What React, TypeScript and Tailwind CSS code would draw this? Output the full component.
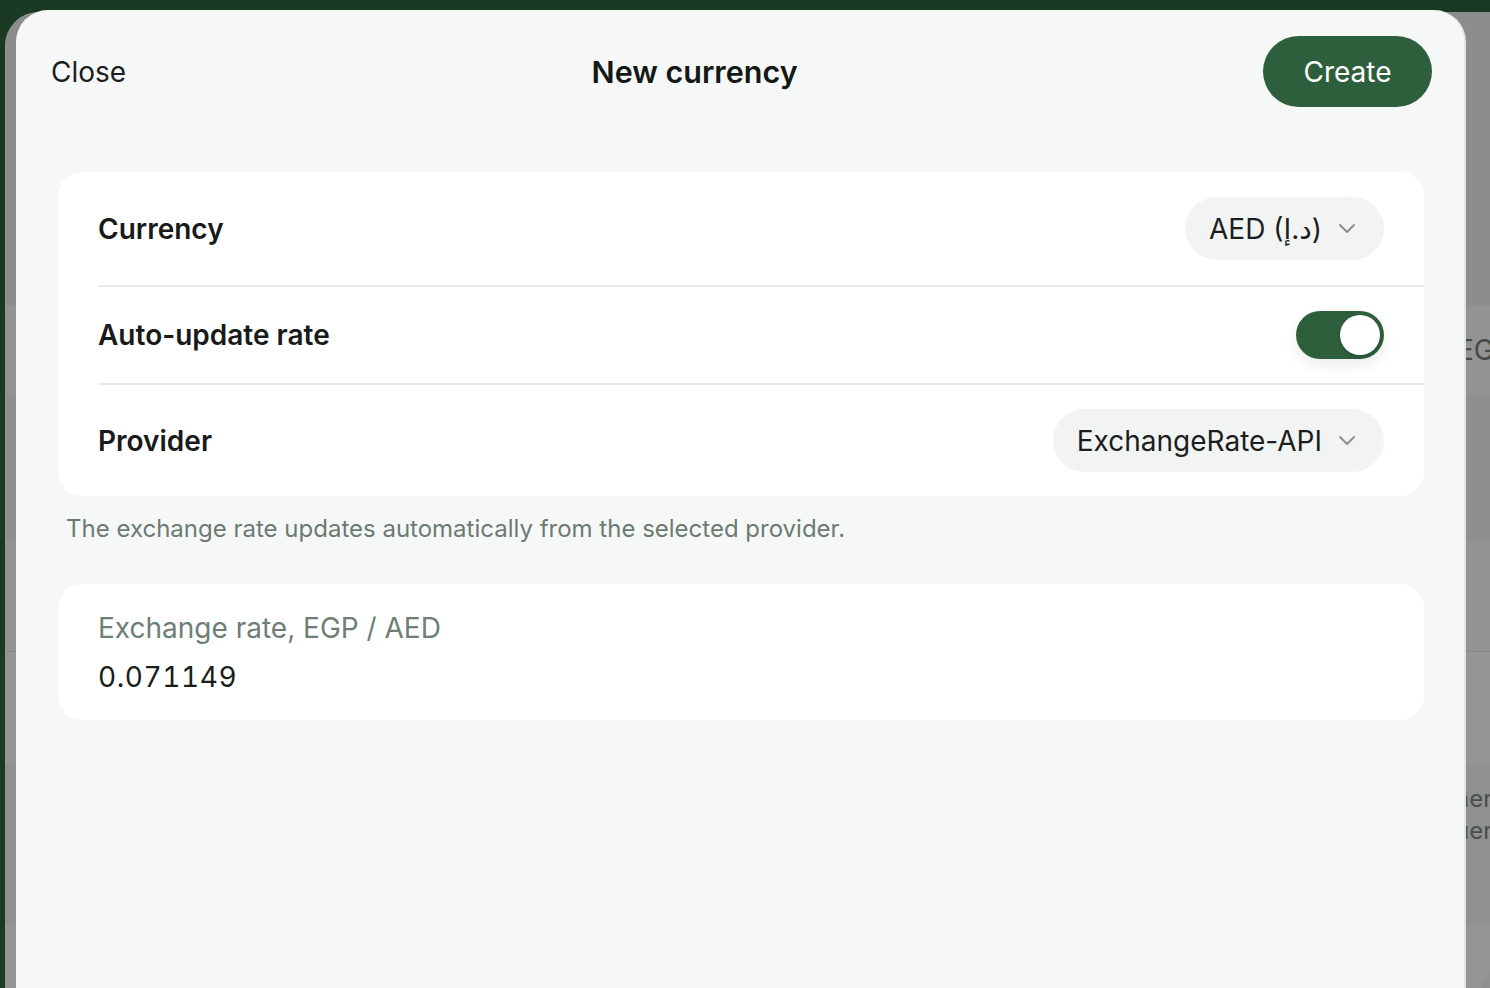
import React from "react";

const Chevron = () => (
  <svg width="18" height="11" viewBox="0 0 18 11" fill="none" stroke="#8b918d" strokeWidth="2" strokeLinecap="round" strokeLinejoin="round">
    <path d="M2 2l7 7 7-7" />
  </svg>
);

function Row({ label, children, last, first }: { label: string; children: React.ReactNode; last?: boolean; first?: boolean }) {
  return (
    <div
      className={`flex items-center justify-between pr-[40px] ${first ? "pt-[25px] pb-[25px]" : "pt-[24px] pb-[24px]"} ${
        last ? "" : "border-b-2 border-[#e6eae8]"
      }`}
    >
      <span className="text-[28px] font-semibold text-[#181b19]">{label}</span>
      {children}
    </div>
  );
}

function Pill({ text }: { text: string }) {
  return (
    <div className="flex h-[63px] items-center gap-[16px] rounded-full bg-[#f2f4f3] pl-[24px] pr-[28px]">
      <span className="text-[28px] text-[#1b1e1c]">{text}</span>
      <Chevron />
    </div>
  );
}

export default function App() {
  return (
    <div
      className="relative h-[988px] w-full overflow-hidden bg-[#1b3a24]"
      style={{ fontFamily: "Inter, 'DejaVu Sans', sans-serif" }}
    >
      {/* dimmed page behind the sheet */}
      <div className="absolute left-[5px] right-0 top-[12px] bottom-0 flex flex-col overflow-hidden rounded-tl-[34px] bg-[#8e8e8e]">
        <div className="h-[293px] shrink-0 bg-[#8d8d8d]" />
        <div className="flex h-[90px] shrink-0 items-center bg-[#939393] pl-[1452px]">
          <span className="whitespace-nowrap text-[28px] text-[#444a46]">EG</span>
        </div>
        <div className="h-[145px] shrink-0 bg-[#8e8f8e]" />
        <div className="h-[112px] shrink-0 border-b border-[#888] bg-[#939393]" />
        <div className="h-[113px] shrink-0 bg-[#959595]" />
        <div className="flex h-[160px] shrink-0 flex-col gap-[4px] bg-[#8f908f] pl-[1450px] pt-[20px] text-[24px] leading-[28px] text-[#4a504c]">
          <span className="whitespace-nowrap">ner p</span>
          <span className="whitespace-nowrap">uer</span>
        </div>
        <div className="relative flex-1 bg-[#959595]">
          <div className="absolute left-[1475px] top-[40px] h-[60px] w-[60px] rounded-full bg-[#909090]" />
        </div>
      </div>

      {/* sheet */}
      <div className="absolute left-[16px] top-[10px] bottom-0 w-[1450px] rounded-t-[32px] border-r-2 border-[#e2e6e4] bg-[#f6f8f7]">
        <div className="flex items-center justify-between pl-[35px] pr-[32px] pt-[26px]">
          <button className="pt-[1px] text-[28px] text-[#1b1e1c]">Close</button>
          <h1 className="text-[30.5px] font-semibold text-[#151916]">New currency</h1>
          <button className="flex h-[71px] w-[169px] items-center justify-center rounded-full bg-[#2e5f3c] text-[28px] text-white">
            Create
          </button>
        </div>

        <div className="ml-[42px] mr-[40px] mt-[65px] rounded-[24px] bg-white pl-[40px]">
          <Row label="Currency" first>
            <Pill text="AED (د.إ)" />
          </Row>
          <Row label="Auto-update rate">
            <div className="flex h-[48px] w-[88px] items-center justify-end rounded-full bg-[#2e5f3c] pr-[4px] shadow-[0_6px_14px_rgba(0,0,0,0.08)]">
              <div className="h-[40px] w-[40px] rounded-full bg-white shadow-[0_2px_4px_rgba(0,0,0,0.15)]" />
            </div>
          </Row>
          <Row label="Provider" last>
            <Pill text="ExchangeRate-API" />
          </Row>
        </div>

        <p className="ml-[50px] mt-[15px] text-[24px] text-[#6c7b72]">
          The exchange rate updates automatically from the selected provider.
        </p>

        <div className="ml-[42px] mr-[40px] mt-[37px] flex flex-col gap-[13px] rounded-[24px] bg-white px-[40px] pb-[25px] pt-[26px]">
          <span className="text-[28px] leading-[36px] text-[#6d7f74]">Exchange rate, EGP / AED</span>
          <span className="text-[28px] leading-[36px] tracking-[0.02em] tabular-nums text-[#1a1d1b]">0.071149</span>
        </div>
      </div>
    </div>
  );
}
